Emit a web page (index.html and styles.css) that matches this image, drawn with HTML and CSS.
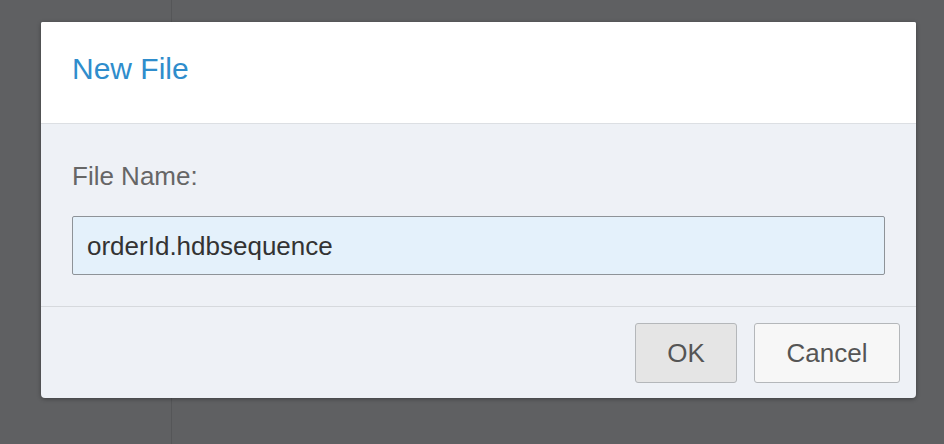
FILE: index.html
```html
<!DOCTYPE html>
<html>
<head>
<meta charset="utf-8">
<link rel="stylesheet" href="styles.css">
</head>
<body>
<div class="app">
  <div class="sidebar"></div>
  <div class="main"></div>
</div>
<div class="dialog">
  <div class="dialog-header">
    <h1 class="dialog-title">New File</h1>
  </div>
  <div class="dialog-body">
    <label class="field-label" for="fname">File Name:</label>
    <div class="field-input" id="fname">orderId.hdbsequence</div>
  </div>
  <div class="dialog-footer">
    <button class="btn btn-ok">OK</button>
    <button class="btn btn-cancel">Cancel</button>
  </div>
</div>
</body>
</html>
```

FILE: styles.css
```css
html, body {
  margin: 0;
  padding: 0;
  width: 944px;
  height: 444px;
  overflow: hidden;
  background: #5f6062;
  font-family: "Liberation Sans", Arial, sans-serif;
}
.app {
  display: flex;
  height: 444px;
}
.sidebar {
  width: 171px;
  border-right: 1px solid #555658;
  background: #5f6062;
}
.main {
  flex: 1;
  background: #5f6062;
}
.dialog {
  position: absolute;
  left: 41px;
  top: 22px;
  width: 875px;
  height: 376px;
  display: flex;
  flex-direction: column;
  background: #eef1f6;
  border-radius: 2px 2px 4px 4px;
  box-shadow: 0 1px 4px rgba(0, 0, 0, 0.35);
  overflow: hidden;
}
.dialog-header {
  height: 102px;
  flex-shrink: 0;
  box-sizing: border-box;
  background: #ffffff;
  border-bottom: 1px solid #dcdfe3;
  padding: 30px 31px 0;
}
.dialog-title {
  margin: 0;
  font-size: 30px;
  line-height: 34px;
  font-weight: normal;
  color: #2f8dcc;
}
.dialog-body {
  height: 183px;
  flex-shrink: 0;
  box-sizing: border-box;
  border-bottom: 1px solid #d6d9dd;
  padding: 37px 31px 0;
  display: flex;
  flex-direction: column;
}
.field-label {
  font-size: 26px;
  line-height: 30px;
  color: #666666;
  margin-bottom: 25px;
}
.field-input {
  height: 59px;
  flex-shrink: 0;
  box-sizing: border-box;
  width: 813px;
  border: 1px solid #8e9398;
  border-radius: 2px;
  background: #e4f1fb;
  padding: 0 14px;
  display: flex;
  align-items: center;
  font-size: 26px;
  line-height: 30px;
  color: #333333;
}
.dialog-footer {
  flex: 1;
  display: flex;
  justify-content: flex-end;
  align-items: flex-start;
  gap: 17px;
  padding: 16px 16px 0;
}
.btn {
  height: 60px;
  box-sizing: border-box;
  border: 1px solid #b4b7ba;
  border-radius: 3px;
  font-family: "Liberation Sans", Arial, sans-serif;
  font-size: 26px;
  color: #555555;
  padding: 0;
}
.btn-ok {
  width: 102px;
  background: #e5e5e5;
}
.btn-cancel {
  width: 146px;
  background: #f7f7f7;
}
```
